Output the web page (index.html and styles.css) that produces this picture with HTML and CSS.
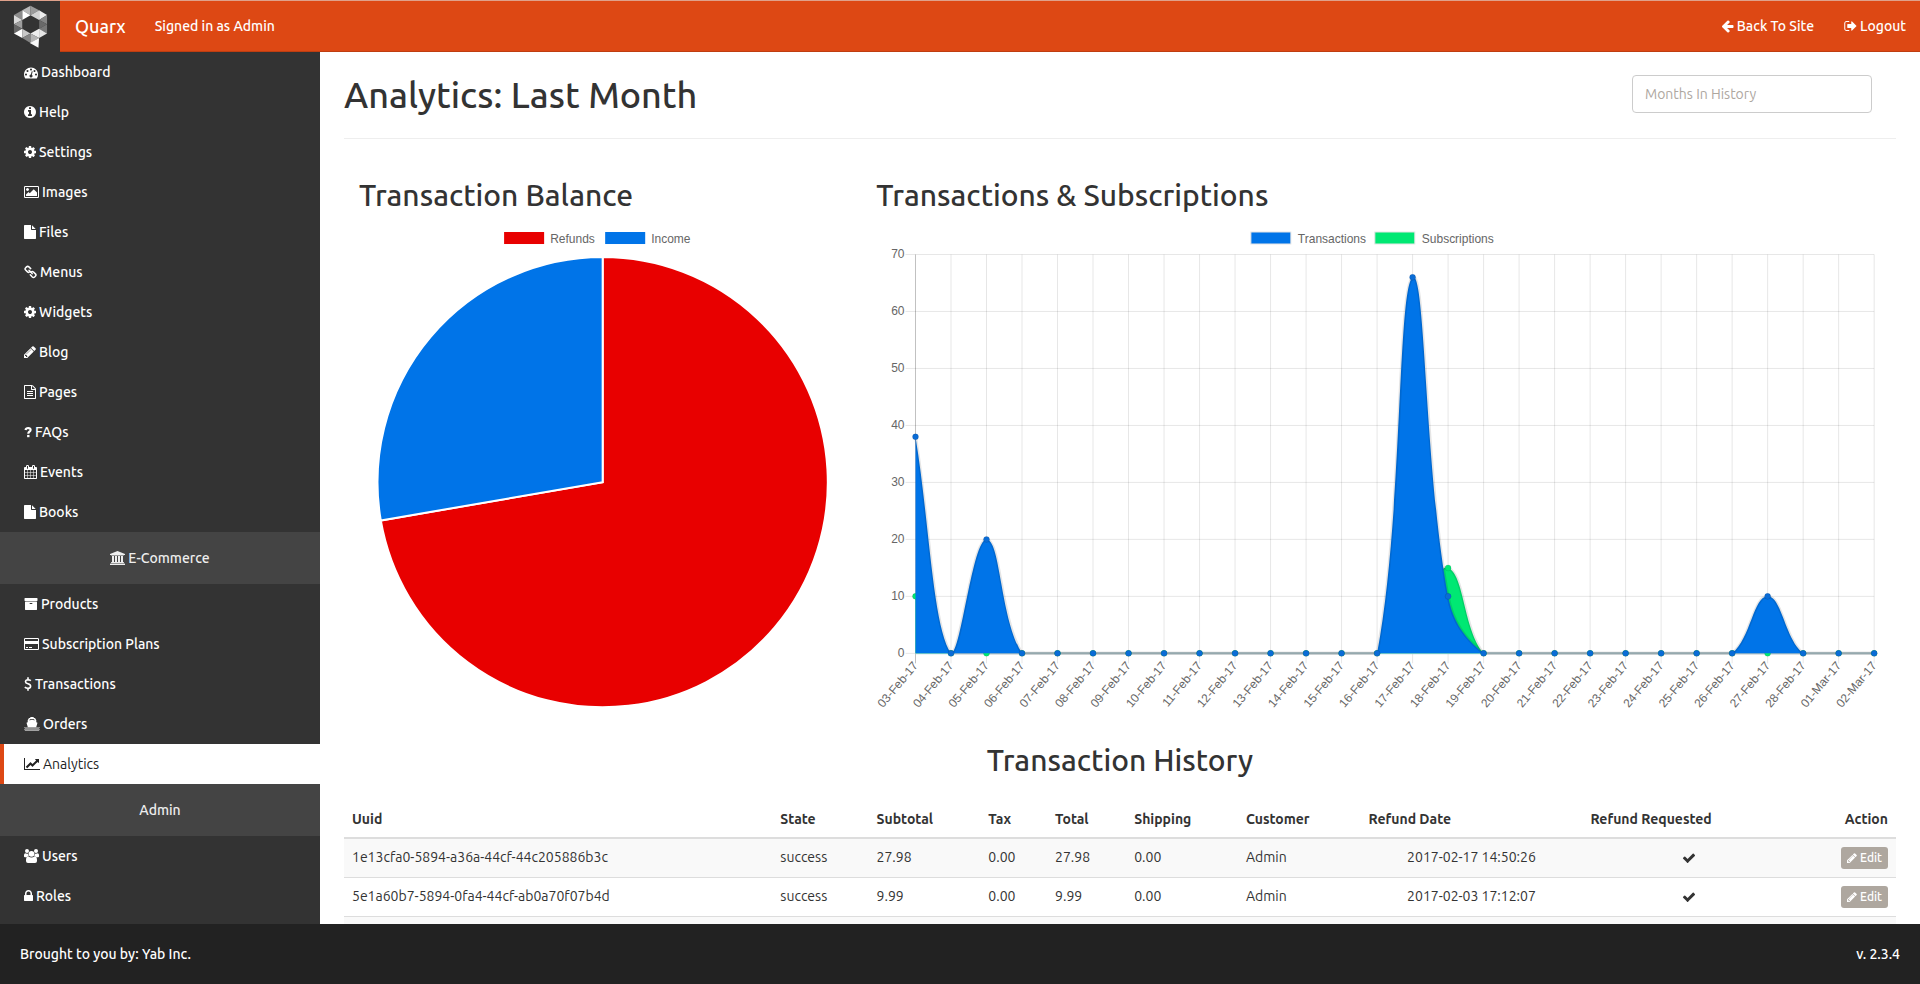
FILE: index.html
```html
<!DOCTYPE html>
<html lang="en">
<head>
<meta charset="utf-8">
<title>Quarx - Analytics</title>
<link rel="stylesheet" href="styles.css">
</head>
<body>
<svg class="sprite" aria-hidden="true">
  <symbol id="i-cog" viewBox="128 0 1536 1792"><path d="M1152 896q0-106-75-181t-181-75-181 75-75 181 75 181 181 75 181-75 75-181zm512-109v222q0 12-8 23t-20 13l-185 28q-19 54-39 91 35 50 107 138 10 12 10 25t-9 23q-27 37-99 108t-94 71q-12 0-26-9l-138-108q-44 23-91 38-16 136-29 186-7 28-36 28h-222q-14 0-24.500-8.500t-11.500-21.500l-28-184q-49-16-90-37l-141 107q-10 9-25 9-14 0-25-11-126-114-165-168-7-10-7-23 0-12 8-23 15-21 51-66.500t54-70.500q-27-50-41-99l-183-27q-13-2-21-12.500t-8-23.500v-222q0-12 8-23t19-13l186-28q14-46 39-92-40-57-107-138-10-12-10-24 0-10 9-23 26-36 98.500-107.500t94.500-71.500q13 0 26 10l138 107q44-23 91-38 16-136 29-186 7-28 36-28h222q14 0 24.500 8.500t11.500 21.500l28 184q49 16 90 37l142-107q9-9 24-9 13 0 25 10 129 119 165 170 7 8 7 22 0 12-8 23-15 21-51 66.500t-54 70.500q26 50 41 98l183 28q13 2 21 12.500t8 23.500z"/></symbol>
  <symbol id="i-file" viewBox="128 0 1536 1792"><path d="M1152 512v-472q22 14 36 28l408 408q14 14 28 36h-472zm-128 32q0 40 28 68t68 28h544v1056q0 40-28 68t-68 28h-1344q-40 0-68-28t-28-68v-1600q0-40 28-68t68-28h800v544z"/></symbol>
  <symbol id="i-pencil" viewBox="128 0 1536 1792"><path d="M491 1536l91-91-235-235-91 91v107h128v128h107zm523-928q0-22-22-22-10 0-17 7l-542 542q-7 7-7 17 0 22 22 22 10 0 17-7l542-542q7-7 7-17zm-54-192l416 416-832 832h-416v-416zm683 96q0 53-37 90l-166 166-416-416 166-165q36-38 90-38 53 0 91 38l235 234q37 39 37 91z"/></symbol>
  <symbol id="i-check" viewBox="0 0 1792 1792"><path d="M1671 566q0 40-28 68l-724 724-136 136q-28 28-68 28t-68-28l-136-136-362-362q-28-28-28-68t28-68l136-136q28-28 68-28t68 28l294 295 656-657q28-28 68-28t68 28l136 136q28 28 28 68z"/></symbol>
</svg>

<header class="navbar">
  <a class="logo" href="#" aria-label="Quarx home">
    <svg viewBox="38 12 104 130" class="logo-mark" aria-hidden="true">
      <path fill="#b9b9b9" d="M90 14L65 28L90 43z"/><path fill="#9a9a9a" d="M90 14L116 28L90 43z"/>
      <path fill="#fff" d="M65 28L90 43L65 57z"/><path fill="#8c8c8c" d="M65 28L40 42L65 57z"/>
      <path fill="#dadada" d="M40 42L65 57L40 70z"/><path fill="#9d9d9d" d="M65 57L40 70L65 84z"/>
      <path fill="#666" d="M40 70L65 84L40 98z"/><path fill="#fff" d="M65 84L40 98L65 112z"/>
      <path fill="#c8c8c8" d="M65 84L90 98L65 112z"/><path fill="#858585" d="M65 112L90 98L90 127z"/>
      <path fill="#d2d2d2" d="M116 28L116 57L90 43z"/><path fill="#ededed" d="M116 28L140 42L116 57z"/>
      <path fill="#858585" d="M140 42L140 70L116 57z"/><path fill="#696969" d="M116 57L140 70L116 84z"/>
      <path fill="#777" d="M140 70L140 98L116 84z"/><path fill="#e6e6e6" d="M116 84L140 98L116 112z"/>
      <path fill="#eee" d="M116 84L116 112L90 98z"/><path fill="#b5b5b5" d="M90 98L116 112L90 127z"/>
      <path fill="#fafafa" d="M116 112L114 141L88 127z"/>
    </svg>
  </a>
  <a class="brand" href="#">Quarx</a>
  <span class="signed">Signed in as Admin</span>
  <nav class="navbar-links">
    <a href="#"><svg class="icon w13" viewBox="64 0 1664 1792"><path d="M1664 896v128q0 53-32.500 90.500t-84.500 37.500h-704l293 294q38 36 38 90t-38 90l-75 76q-37 37-90 37-52 0-91-37l-651-652q-37-37-37-90 0-52 37-91l651-650q38-38 91-38 52 0 90 38l75 74q38 38 38 91t-38 91l-293 293h704q52 0 84.500 37.500t32.500 90.500z"/></svg>Back To Site</a>
    <a href="#"><svg class="icon w13" viewBox="64 0 1600 1792"><path d="M704 1440q0 4 1 20t.5 26.500-3 23.500-10 19.500-20.500 6.500h-320q-119 0-203.500-84.500t-84.500-203.500v-704q0-119 84.500-203.500t203.500-84.500h320q13 0 22.500 9.500t9.500 22.500q0 4 1 20t.5 26.500-3 23.500-10 19.500-20.500 6.500h-320q-66 0-113 47t-47 113v704q0 66 47 113t113 47h312l11.500 1 11.500 3 8 5.500 7 9 2 13.500zm928-544q0 26-19 45l-544 544q-19 19-45 19t-45-19-19-45v-288h-448q-26 0-45-19t-19-45v-384q0-26 19-45t45-19h448v-288q0-26 19-45t45-19 45 19l544 544q19 19 19 45z"/></svg>Logout</a>
  </nav>
</header>

<div class="body">
  <nav class="sidebar" aria-label="Main">
    <a href="#"><svg class="icon w14" viewBox="0 -64 1792 1792"><path d="M384 1152q0-53-37.500-90.500t-90.500-37.500-90.500 37.500-37.500 90.500 37.500 90.500 90.500 37.500 90.500-37.500 37.500-90.500zm192-448q0-53-37.500-90.500t-90.500-37.500-90.500 37.500-37.500 90.500 37.500 90.500 90.500 37.500 90.500-37.500 37.500-90.500zm428 481l101-382q6-26-7.500-48.500t-38.500-29.500-48 6.500-30 39.500l-101 382q-60 5-107 43.500t-63 98.500q-20 77 20 146t117 89 146-20 89-117q16-60-6-117t-72-91zm660-33q0-53-37.500-90.500t-90.500-37.500-90.500 37.500-37.500 90.500 37.500 90.500 90.500 37.500 90.500-37.500 37.500-90.500zm-640-640q0-53-37.500-90.500t-90.500-37.500-90.500 37.500-37.500 90.500 37.500 90.500 90.500 37.500 90.500-37.500 37.500-90.500zm448 192q0-53-37.500-90.500t-90.500-37.500-90.500 37.500-37.500 90.500 37.500 90.500 90.500 37.500 90.500-37.500 37.500-90.500zm320 448q0 261-141 483-19 29-54 29h-1402q-35 0-54-29-141-221-141-483 0-182 71-348t191-286 286-191 348-71 348 71 286 191 191 286 71 348z"/></svg>Dashboard</a>
    <a href="#"><svg class="icon w12" viewBox="128 0 1536 1792"><path d="M1152 1376v-160q0-14-9-23t-23-9h-96v-512q0-14-9-23t-23-9h-320q-14 0-23 9t-9 23v160q0 14 9 23t23 9h96v320h-96q-14 0-23 9t-9 23v160q0 14 9 23t23 9h448q14 0 23-9t9-23zm-128-896v-160q0-14-9-23t-23-9h-192q-14 0-23 9t-9 23v160q0 14 9 23t23 9h192q14 0 23-9t9-23zm640 416q0 209-103 385.500t-279.500 279.500-385.500 103-385.500-103-279.500-279.500-103-385.500 103-385.500 279.500-279.500 385.500-103 385.500 103 279.500 279.500 103 385.500z"/></svg>Help</a>
    <a href="#"><svg class="icon w12"><use href="#i-cog"/></svg>Settings</a>
    <a href="#"><svg class="icon w15" viewBox="-64 0 1920 1792"><path d="M576 576q0 80-56 136t-136 56-136-56-56-136 56-136 136-56 136 56 56 136zm1024 384v448h-1408v-192l320-320 160 160 512-512zm96-704h-1600q-13 0-22.500 9.500t-9.500 22.500v1216q0 13 9.500 22.500t22.500 9.500h1600q13 0 22.500-9.500t9.500-22.500v-1216q0-13-9.500-22.500t-22.500-9.500zm160 32v1216q0 66-47 113t-113 47h-1600q-66 0-113-47t-47-113v-1216q0-66 47-113t113-47h1600q66 0 113 47t47 113z"/></svg>Images</a>
    <a href="#"><svg class="icon w12"><use href="#i-file"/></svg>Files</a>
    <a href="#"><svg class="icon w13" viewBox="0 0 13 14"><g fill="none" stroke="currentColor" stroke-width="1.500" stroke-linecap="round"><path d="M6.700 3.600L4.900 1.900Q3.700 .8 2.500 1.900L1.500 2.900Q.6 4 1.600 5L3.500 6.900Q4.700 7.900 5.900 6.800"/><path d="M6.300 9.800L8.300 12Q9.500 13 10.600 12L11.500 11.100Q12.500 10 11.400 8.900L9.500 7Q8.300 6 7.200 7.100"/><path d="M5 5.200L8.200 8.600"/></g></svg>Menus</a>
    <a href="#"><svg class="icon w12"><use href="#i-cog"/></svg>Widgets</a>
    <a href="#"><svg class="icon w12"><use href="#i-pencil"/></svg>Blog</a>
    <a href="#"><svg class="icon w12" viewBox="128 0 1536 1792"><path d="M1596 380q28 28 48 76t20 88v1152q0 40-28 68t-68 28h-1344q-40 0-68-28t-28-68v-1600q0-40 28-68t68-28h896q40 0 88 20t76 48zm-444-244v376h376q-10-29-22-41l-313-313q-12-12-41-22zm384 1528v-1024h-416q-40 0-68-28t-28-68v-416h-768v1536h1280zm-1024-864q0-14 9-23t23-9h704q14 0 23 9t9 23v64q0 14-9 23t-23 9h-704q-14 0-23-9t-9-23v-64zm736 224q14 0 23 9t9 23v64q0 14-9 23t-23 9h-704q-14 0-23-9t-9-23v-64q0-14 9-23t23-9h704zm0 256q14 0 23 9t9 23v64q0 14-9 23t-23 9h-704q-14 0-23-9t-9-23v-64q0-14 9-23t23-9h704z"/></svg>Pages</a>
    <a href="#"><svg class="icon w8" viewBox="0 0 8 14"><path fill="none" stroke="currentColor" stroke-width="2.200" d="M1.500 5Q2 3 4.200 3Q6.700 3.100 6.600 5Q6.500 6.100 5.300 6.800Q4.300 7.400 4.300 8.800"/><path d="M3.100 9.900h2.400v2.300h-2.400z"/></svg>FAQs</a>
    <a href="#"><svg class="icon w13" viewBox="64 0 1664 1792"><path d="M192 1664h288v-288h-288v288zm352 0h320v-288h-320v288zm-352-352h288v-320h-288v320zm352 0h320v-320h-320v320zm-352-384h288v-288h-288v288zm736 736h320v-288h-320v288zm-384-736h320v-288h-320v288zm768 736h288v-288h-288v288zm-384-352h320v-320h-320v320zm-352-864v-288q0-13-9.500-22.500t-22.500-9.500h-64q-13 0-22.500 9.500t-9.500 22.500v288q0 13 9.500 22.500t22.500 9.500h64q13 0 22.500-9.500t9.500-22.500zm736 864h288v-320h-288v320zm-384-384h320v-288h-320v288zm384 0h288v-288h-288v288zm32-480v-288q0-13-9.500-22.500t-22.500-9.500h-64q-13 0-22.500 9.500t-9.500 22.500v288q0 13 9.500 22.500t22.500 9.500h64q13 0 22.500-9.500t9.500-22.500zm384-64v1280q0 52-38 90t-90 38h-1408q-52 0-90-38t-38-90v-1280q0-52 38-90t90-38h128v-96q0-66 47-113t113-47h64q66 0 113 47t47 113v96h384v-96q0-66 47-113t113-47h64q66 0 113 47t47 113v96h128q52 0 90 38t38 90z"/></svg>Events</a>
    <a href="#"><svg class="icon w12"><use href="#i-file"/></svg>Books</a>
    <div class="section"><svg class="icon w15" viewBox="0 0 1920 1792"><path d="M960 0l960 384v128h-128q0 26-20.500 45t-48.500 19h-1526q-28 0-48.500-19t-20.500-45h-128v-128zm-704 640h256v768h128v-768h256v768h128v-768h256v768h128v-768h256v768h59q28 0 48.500 19t20.500 45v64h-1664v-64q0-26 20.500-45t48.500-19h59v-768zm1595 960q28 0 48.500 19t20.500 45v128h-1920v-128q0-26 20.500-45t48.500-19h1782z"/></svg>E-Commerce</div>
    <a href="#"><svg class="icon w14" viewBox="0 0 1792 1792"><path d="M1088 832q0-26-19-45t-45-19h-256q-26 0-45 19t-19 45 19 45 45 19h256q26 0 45-19t19-45zm576-192v960q0 26-19 45t-45 19h-1408q-26 0-45-19t-19-45v-960q0-26 19-45t45-19h1408q26 0 45 19t19 45zm64-448v256q0 26-19 45t-45 19h-1536q-26 0-45-19t-19-45v-256q0-26 19-45t45-19h1536q26 0 45 19t19 45z"/></svg>Products</a>
    <a href="#"><svg class="icon w15" viewBox="0 0 1920 1792"><path d="M1760 128q66 0 113 47t47 113v1216q0 66-47 113t-113 47h-1600q-66 0-113-47t-47-113v-1216q0-66 47-113t113-47h1600zm-1600 128q-13 0-22.500 9.500t-9.500 22.500v224h1664v-224q0-13-9.500-22.500t-22.500-9.500h-1600zm1600 1280q13 0 22.500-9.500t9.500-22.500v-608h-1664v608q0 13 9.500 22.500t22.500 9.500h1600zm-1504-128v-128h256v128h-256zm384 0v-128h384v128h-384z"/></svg>Subscription Plans</a>
    <a href="#"><svg class="icon w8" viewBox="0 0 8 14"><path fill="none" stroke="currentColor" stroke-width="1.600" d="M6.900 3.700Q5.600 2.700 4 2.700Q1.500 2.800 1.500 4.700Q1.500 6 4 6.800Q6.700 7.600 6.600 9.400Q6.400 11.300 3.900 11.300Q2.200 11.300 .8 10.100M4 .2v2.600M4 11.300v2.500"/></svg>Transactions</a>
    <a href="#"><svg class="icon w16" viewBox="0 0 16 14"><path d="M6.300 0h3.400v1h1.300l1.300 2.300v2l1.200.5-1.300 4.400H3.800L2.500 5.800l1.200-.5v-2L5 1h1.300z"/><path fill="#333" d="M5.100 3.300Q5.600 2 8 2T10.900 3.300L10 3.300Q9.500 2.800 8 2.800T6 3.300z"/><path fill="none" stroke="currentColor" stroke-width="1" stroke-dasharray="1 1" d="M.5 10.700h15M1.500 11.700h14M.5 12.700h15M1.500 13.500h14"/></svg>Orders</a>
    <a href="#" class="active" aria-current="page"><svg class="icon w16" viewBox="0 0 2048 1792"><path d="M2048 1536v128h-2048v-1536h128v1408h1920zm-128-1248v435q0 21-19.500 29.500t-35.500-7.500l-121-121-633 633q-10 10-23 10t-23-10l-233-233-416 416-192-192 585-585q10-10 23-10t23 10l233 233 464-464-121-121q-16-16-7.500-35.500t29.500-19.500h435q14 0 23 9t9 23z"/></svg>Analytics</a>
    <div class="section">Admin</div>
    <a href="#"><svg class="icon w15" viewBox="0 0 15 14"><circle cx="3" cy="2" r="2"/><circle cx="12" cy="2" r="2"/><path d="M0 7.600V6Q0 4.300 1.500 4.300Q2.700 5 4.200 4.500Q4 6 5 7.200Q3.600 7.300 2.900 8.200H1Q0 8.200 0 7.600zM15 7.600V6Q15 4.300 13.500 4.300Q12.300 5 10.800 4.500Q11 6 10 7.200Q11.400 7.300 12.100 8.200H14Q15 8.200 15 7.600z"/><circle cx="7.500" cy="4.800" r="2.900"/><path d="M2 12V11Q2 7.600 4.500 7.600Q7.500 9.500 10.500 7.600Q13 7.600 13 11V12Q13 14 11 14H4Q2 14 2 12z"/></svg>Users</a>
    <a href="#"><svg class="icon w9" viewBox="320 0 1152 1792"><path d="M640 768h512v-192q0-106-75-181t-181-75-181 75-75 181v192zm832 96v576q0 40-28 68t-68 28h-960q-40 0-68-28t-28-68v-576q0-40 28-68t68-28h32v-192q0-184 132-316t316-132 316 132 132 316v192h32q40 0 68 28t28 68z"/></svg>Roles</a>
  </nav>

  <main class="content">
    <div class="page-head">
      <h1>Analytics: Last Month</h1>
      <input type="text" class="months" placeholder="Months In History" aria-label="Months In History">
    </div>

    <div class="charts">
      <section class="chart-pie">
        <h2>Transaction Balance</h2>
        <svg id="pie" class="chart" viewBox="0 0 487 487" role="img" aria-label="Refunds and income"></svg>
      </section>
      <section class="chart-line">
        <h2>Transactions &amp; Subscriptions</h2>
        <svg id="line" class="chart" viewBox="0 0 1005 487" role="img" aria-label="Transactions and subscriptions per day"></svg>
      </section>
    </div>

    <h2 class="history-title">Transaction History</h2>
    <table class="history">
      <colgroup><col class="c-uuid"><col class="c-state"><col class="c-sub"><col class="c-tax"><col class="c-total"><col class="c-ship"><col class="c-cust"><col class="c-date"><col class="c-req"><col class="c-act"></colgroup>
      <thead>
        <tr><th>Uuid</th><th>State</th><th>Subtotal</th><th>Tax</th><th>Total</th><th>Shipping</th><th>Customer</th><th>Refund Date</th><th>Refund Requested</th><th class="right">Action</th></tr>
      </thead>
      <tbody>
        <tr><td>1e13cfa0-5894-a36a-44cf-44c205886b3c</td><td>success</td><td>27.98</td><td>0.00</td><td>27.98</td><td>0.00</td><td>Admin</td><td class="center">2017-02-17 14:50:26</td><td class="center"><svg class="icon w14"><use href="#i-check"/></svg></td><td class="right"><button type="button" class="edit"><svg class="icon"><use href="#i-pencil"/></svg>Edit</button></td></tr>
        <tr><td>5e1a60b7-5894-0fa4-44cf-ab0a70f07b4d</td><td>success</td><td>9.99</td><td>0.00</td><td>9.99</td><td>0.00</td><td>Admin</td><td class="center">2017-02-03 17:12:07</td><td class="center"><svg class="icon w14"><use href="#i-check"/></svg></td><td class="right"><button type="button" class="edit"><svg class="icon"><use href="#i-pencil"/></svg>Edit</button></td></tr>
        <tr><td colspan="10"></td></tr>
      </tbody>
    </table>
  </main>
</div>

<footer class="footer"><span>Brought to you by: Yab Inc.</span><span>v. 2.3.4</span></footer>
<script src="charts.js"></script>
</body>
</html>
```

FILE: styles.css
```css
* { box-sizing: border-box; }

body {
  margin: 0;
  height: 100vh;
  display: flex;
  flex-direction: column;
  overflow: hidden;
  background: #fff;
  color: #333;
  font: 14px/20px Ubuntu, "Noto Sans", sans-serif;
}

a { color: inherit; text-decoration: none; }

.sprite { display: none; }

.icon { height: 14px; width: 14px; fill: currentColor; flex: none; }
.w8 { width: 8px; }
.w9 { width: 9px; }
.w12 { width: 12px; }
.w13 { width: 13px; }
.w14 { width: 14px; }
.w15 { width: 15px; }
.w16 { width: 16px; }

/* Top bar */
.navbar {
  flex: none;
  display: flex;
  align-items: center;
  height: 52px;
  border-top: 1px solid #dfa18b;
  border-bottom: 1px solid #bf3e11;
  background: #dd4814;
  color: #fff;
  font-weight: 500;
}

.logo {
  display: flex;
  align-items: center;
  justify-content: center;
  align-self: stretch;
  width: 60px;
  margin-bottom: -1px;
  background: #333;
}

.logo-mark { width: 35px; height: 43px; }
.brand { padding-left: 15px; font-size: 18px; }
.signed { padding-left: 29px; }

.navbar-links { display: flex; gap: 30px; margin-left: auto; padding-right: 14px; }
.navbar-links a { display: flex; align-items: center; gap: 3px; }

/* Sidebar */
.body { flex: 1; min-height: 0; display: flex; }

.sidebar {
  flex: none;
  width: 320px;
  overflow: hidden;
  background: #333;
  color: #fff;
  font-weight: 500;
}

.sidebar a,
.section { display: flex; align-items: center; gap: 3px; }

.sidebar a { height: 40px; padding-left: 24px; }

.section {
  height: 52px;
  justify-content: center;
  background: #444;
  color: #eee;
}

.sidebar .active {
  padding-left: 20px;
  border-left: 4px solid #dd4814;
  background: #fff;
  color: #222;
  font-weight: 400;
}

/* Content */
.content { flex: 1; min-width: 0; overflow: hidden; padding: 0 24px; }

.page-head {
  display: flex;
  align-items: flex-start;
  justify-content: space-between;
  height: 87px;
  padding: 23px 24px 0 0;
  border-bottom: 1px solid #eee;
}

h1, h2 { margin: 0; font-weight: 500; }
h1 { font-size: 36px; line-height: 40px; }
h2 { font-size: 30px; line-height: 33px; }

.months {
  width: 240px;
  height: 38px;
  padding: 8px 12px;
  border: 1px solid #ccc;
  border-radius: 4px;
  background: #fff;
  color: #333;
  font: inherit;
}

.months::placeholder { color: #aea79f; opacity: 1; }

.charts { display: grid; grid-template-columns: 1fr 2fr; padding-top: 40px; }
.charts section { min-width: 0; padding: 0 15px; }

.chart { display: block; width: 100%; margin-top: 10px; overflow: visible; }
.chart text { font: 12px "Liberation Sans", Arial, sans-serif; fill: #666; dominant-baseline: central; }
.chart .end { text-anchor: end; }
.grid { stroke: rgba(0, 0, 0, .1); }
.zero { stroke: rgba(0, 0, 0, .25); }
.baseline { stroke: #b9d3d9; stroke-width: 2; }
.outline { fill: none; stroke: rgba(0, 0, 0, .1); stroke-width: 3; }
.slice { stroke: #fff; stroke-width: 2; }
.red { fill: #e80000; }
.blue { fill: #0074e8; }
.green { fill: #00e873; }
.dot { stroke: rgba(0, 0, 0, .1); }
.dot.blue { fill: #0a6cd6; }
.key { stroke: #e5e5e5; }

.history-title { margin: 35px 0 24px; text-align: center; }

/* History table */
.history { width: 100%; table-layout: fixed; border-collapse: separate; border-spacing: 0; }
.history th { height: 38px; padding: 0 8px; border-bottom: 2px solid #ddd; font-weight: 700; text-align: left; }
.history td { height: 39px; padding: 8px 8px 0; border-bottom: 1px solid #ddd; vertical-align: top; }
.history tbody tr:nth-child(odd) { background: #f9f9f9; }
.history .right { text-align: right; }
.history .center { text-align: center; }
.history td .icon { vertical-align: text-bottom; }

.c-uuid { width: 27.6%; }
.c-state { width: 6.2%; }
.c-sub { width: 7.2%; }
.c-tax { width: 4.3%; }
.c-total { width: 5.1%; }
.c-ship { width: 7.2%; }
.c-cust { width: 7.9%; }
.c-date { width: 14.3%; }
.c-req { width: 13.7%; }
.c-act { width: 6.5%; }

.edit {
  display: inline-flex;
  align-items: center;
  gap: 3px;
  height: 22px;
  padding: 0 6px;
  border: 0;
  border-radius: 3px;
  background: #aea79f;
  color: #fff;
  font: 500 12px/18px Ubuntu, "Noto Sans", sans-serif;
  vertical-align: top;
}

.edit .icon { width: 10px; height: 12px; }

/* Footer */
.footer {
  flex: none;
  display: flex;
  align-items: center;
  justify-content: space-between;
  height: 60px;
  padding: 0 20px;
  background: #222;
  color: #fff;
  font-weight: 500;
}
```

FILE: charts.js
```js
const NS = 'http://www.w3.org/2000/svg';

function add(parent, tag, attrs, text) {
  const el = document.createElementNS(NS, tag);
  for (const k in attrs) el.setAttribute(k, attrs[k]);
  if (text !== undefined) el.textContent = text;
  parent.appendChild(el);
  return el;
}

function legend(svg, x, color, label, bordered) {
  add(svg, 'rect', { x: x, y: 10, width: 40, height: 12, class: color + (bordered ? ' key' : '') });
  add(svg, 'text', { x: x + (bordered ? 47 : 46), y: 17 }, label);
}

/* Pie chart */
const pie = document.getElementById('pie');
const cx = 243.5, cy = 260, r = 225;
const split = 260.2 * Math.PI / 180;
const px = cx + r * Math.sin(split), py = cy - r * Math.cos(split);
legend(pie, 145, 'red', 'Refunds');
legend(pie, 246, 'blue', 'Income');
add(pie, 'path', { class: 'slice red', d: `M${cx} ${cy}V${cy - r}A${r} ${r} 0 1 1 ${px} ${py}Z` });
add(pie, 'path', { class: 'slice blue', d: `M${cx} ${cy}L${px} ${py}A${r} ${r} 0 0 1 ${cx} ${cy - r}Z` });

/* Area chart */
const line = document.getElementById('line');
const left = 39.5, right = 998.5, top0 = 32.5, bottom = 431.5, count = 28;
const step = (right - left) / (count - 1);
const X = i => left + i * step;
const Y = v => bottom - v * (bottom - top0) / 70;

legend(line, 375, 'blue', 'Transactions', true);
legend(line, 499, 'green', 'Subscriptions', true);

for (let v = 0; v <= 70; v += 10) {
  add(line, 'line', { class: 'grid', x1: left - 10, x2: v ? right : left, y1: Y(v), y2: Y(v) });
  add(line, 'text', { class: 'end', x: left - 11, y: Y(v) }, v);
}
for (let i = 0; i < count; i++) {
  add(line, 'line', { class: i ? 'grid' : 'zero', x1: X(i), x2: X(i), y1: top0, y2: bottom + 10 });
  const day = i + 3;
  const label = day <= 28 ? String(day).padStart(2, '0') + '-Feb-17' : '0' + (day - 28) + '-Mar-17';
  add(line, 'text', { class: 'end', transform: `translate(${X(i)} ${bottom + 10}) rotate(-50)` }, label);
}

function series(values, color) {
  const pts = values.map((v, i) => [X(i), Y(v)]);
  const clamp = y => Math.min(bottom, Math.max(top0, y));
  const ctl = pts.map((p, i) => {
    const a = pts[i - 1] || p, b = pts[i + 1] || p;
    const d0 = Math.hypot(p[0] - a[0], p[1] - a[1]);
    const d1 = Math.hypot(b[0] - p[0], b[1] - p[1]);
    const f0 = 0.4 * d0 / (d0 + d1), f1 = 0.4 * d1 / (d0 + d1);
    return [p[0] - f0 * (b[0] - a[0]), clamp(p[1] - f0 * (b[1] - a[1])),
            p[0] + f1 * (b[0] - a[0]), clamp(p[1] + f1 * (b[1] - a[1]))];
  });
  let d = `M${pts[0]}`;
  for (let i = 1; i < pts.length; i++) {
    d += `C${ctl[i - 1][2]} ${ctl[i - 1][3]} ${ctl[i][0]} ${ctl[i][1]} ${pts[i]}`;
  }
  add(line, 'path', { class: color, d: `${d}V${bottom}H${left}Z` });
  add(line, 'path', { class: 'outline', d: d });
  pts.forEach(p => add(line, 'circle', { class: 'dot ' + color, cx: p[0], cy: p[1], r: 3 }));
}

const zeros = () => new Array(count).fill(0);
const subs = zeros();
subs[0] = 10;
subs[14] = 5;
subs[15] = 15;
const trans = zeros();
trans[0] = 38;
trans[2] = 20;
trans[14] = 66;
trans[15] = 10;
trans[24] = 10;

add(line, 'line', { class: 'baseline', x1: left, x2: right, y1: bottom, y2: bottom });
series(subs, 'green');
series(trans, 'blue');
```
